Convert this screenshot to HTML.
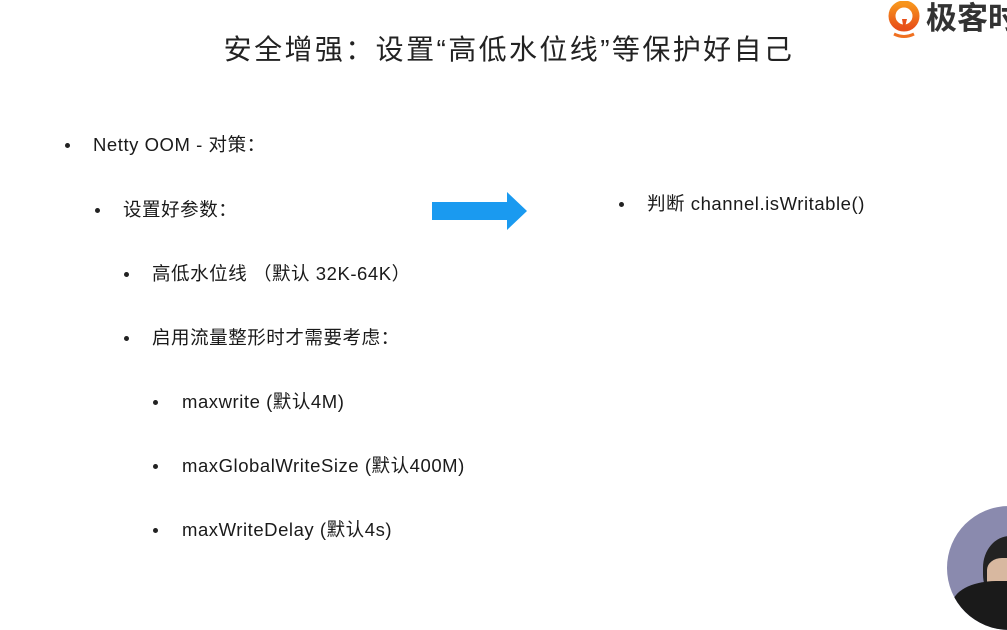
<!DOCTYPE html>
<html><head><meta charset="utf-8"><style>
html,body{margin:0;padding:0;}
body{width:1007px;height:584px;background:#fff;position:relative;overflow:hidden;font-family:"Liberation Sans","Noto Sans CJK SC",sans-serif;color:#1a1a1a;}
.t{position:absolute;white-space:nowrap;font-size:18.5px;line-height:22px;letter-spacing:0.55px;}
.b{position:absolute;width:5px;height:5px;border-radius:50%;background:#222;}
</style></head><body>
<div class="t" style="left:0;width:1018px;text-align:center;top:32px;font-size:28px;line-height:36px;letter-spacing:2.4px;color:#222;">安全增强：设置“高低水位线”等保护好自己</div>

<div style="position:absolute;left:887px;top:1px;width:34px;height:38px;">
<svg width="34" height="38" viewBox="0 0 34 38"><defs><linearGradient id="g" x1="0" y1="0" x2="0" y2="1"><stop offset="0" stop-color="#f7941d"/><stop offset="1" stop-color="#e8501a"/></linearGradient></defs>
<circle cx="17" cy="15" r="12" fill="none" stroke="url(#g)" stroke-width="7"/><path d="M15 18 L17 30 L20 18 Z" fill="#e8501a"/><path d="M7 33 Q17 38 27 33" stroke="#f07020" stroke-width="3" fill="none"/></svg></div>
<div class="t" style="left:926px;top:0px;font-size:31px;line-height:38px;color:#333;font-weight:bold;letter-spacing:0;">极客时</div>

<div class="b" style="left:65px;top:143px;"></div>
<div class="t" style="left:93px;top:134px;">Netty OOM - 对策：</div>
<div class="b" style="left:95px;top:208px;"></div>
<div class="t" style="left:123px;top:199px;">设置好参数：</div>
<div class="b" style="left:124px;top:272px;"></div>
<div class="t" style="left:152px;top:263px;">高低水位线 （默认 32K-64K）</div>
<div class="b" style="left:124px;top:336px;"></div>
<div class="t" style="left:152px;top:327px;">启用流量整形时才需要考虑：</div>
<div class="b" style="left:153px;top:400px;"></div>
<div class="t" style="left:182px;top:391px;">maxwrite (默认4M)</div>
<div class="b" style="left:153px;top:464px;"></div>
<div class="t" style="left:182px;top:455px;">maxGlobalWriteSize (默认400M)</div>
<div class="b" style="left:153px;top:528px;"></div>
<div class="t" style="left:182px;top:519px;">maxWriteDelay (默认4s)</div>

<svg style="position:absolute;left:432px;top:192px;" width="96" height="38" viewBox="0 0 96 38"><path d="M0 10 H75 V0 L95 19 L75 38 V28 H0 Z" fill="#1a9af0"/></svg>

<div class="b" style="left:619px;top:202px;"></div>
<div class="t" style="left:647px;top:193px;">判断 channel.isWritable()</div>

<div style="position:absolute;left:947px;top:506px;width:124px;height:124px;border-radius:50%;background:#8a8aae;overflow:hidden;">
<div style="position:absolute;left:36px;top:30px;width:60px;height:70px;border-radius:45%;background:#222;"></div>
<div style="position:absolute;left:40px;top:52px;width:50px;height:40px;background:#d8b8a0;border-radius:30%;"></div>
<div style="position:absolute;left:5px;top:75px;width:110px;height:60px;background:#1a1a1a;border-radius:40% 40% 0 0;"></div>
</div>
</body></html>
